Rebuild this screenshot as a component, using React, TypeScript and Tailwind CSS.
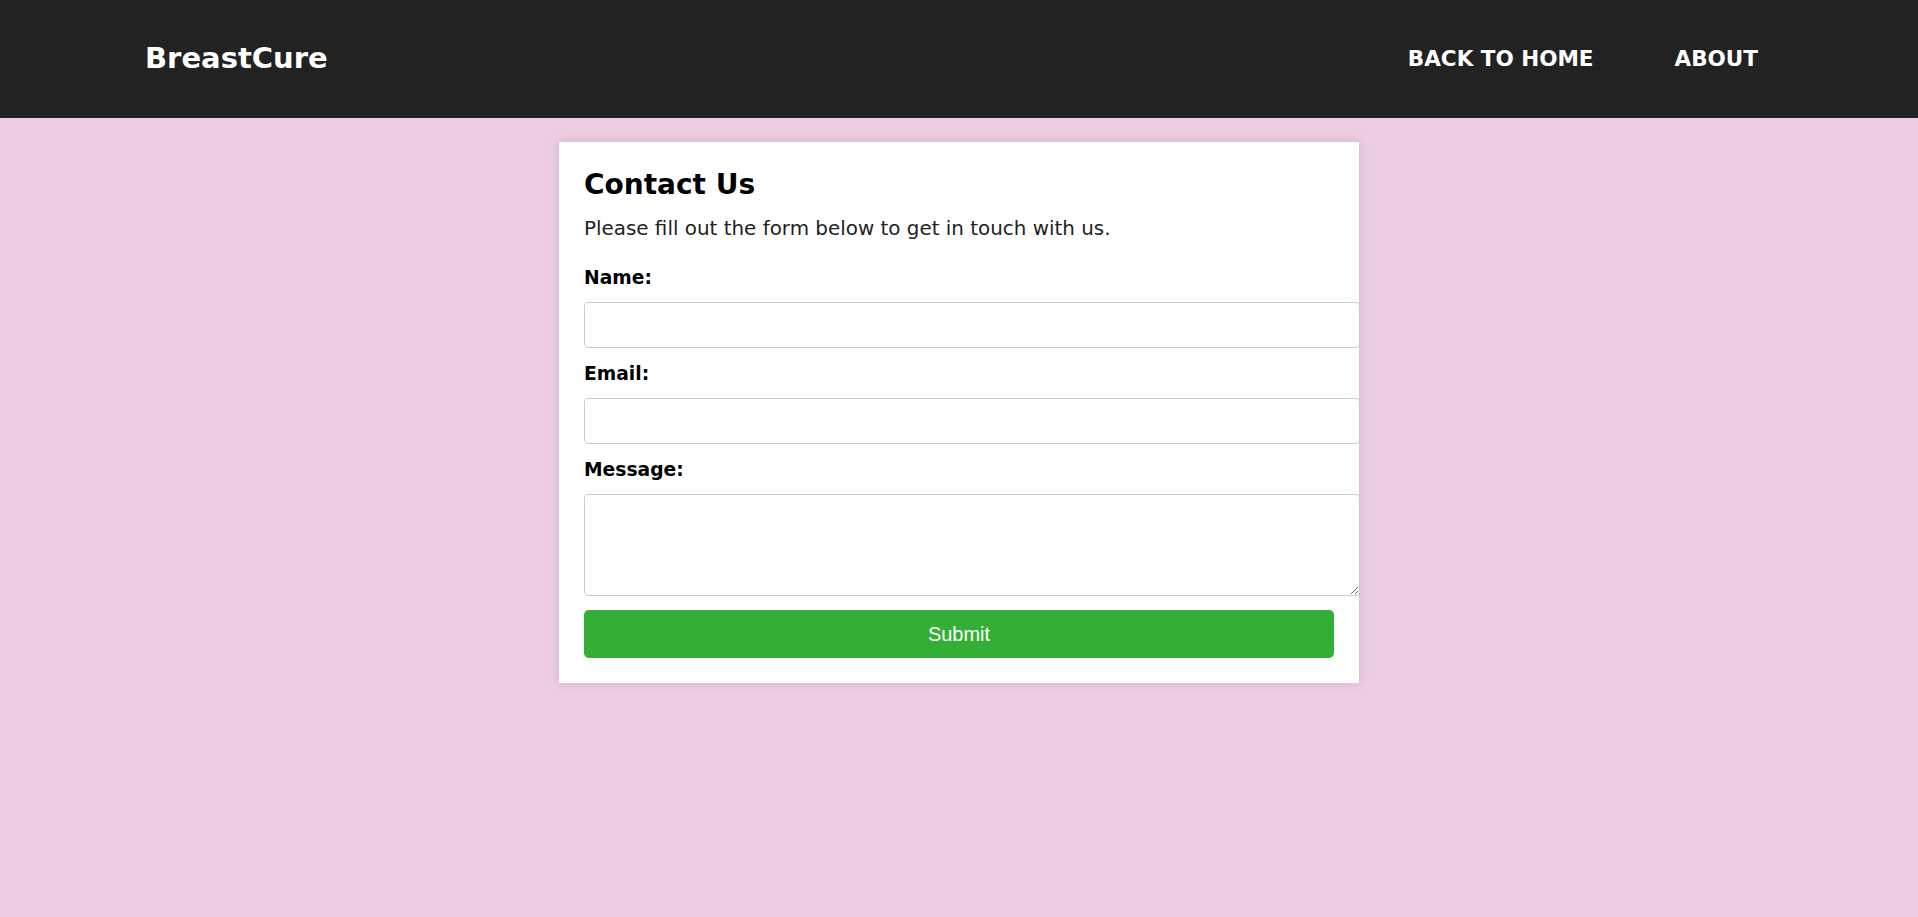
const labelCls = "block font-bold text-[18.7px] leading-[22px] text-black";
const fieldCls =
  "block w-[776px] rounded-[4px] border border-[#cccccc] bg-white px-3 outline-none";

export default function App() {
  return (
    <div className="min-h-[917px] bg-[#eccde4] font-['DejaVu_Sans',sans-serif]">
      <header className="flex h-[118px] items-center justify-between bg-[#222222] pl-[145px] pr-[160px] text-white">
        <div className="text-[29px] font-bold">BreastCure</div>
        <nav className="flex items-center gap-[81px] text-[21.5px] font-bold uppercase">
          <a href="#" className="text-white">Back to Home</a>
          <a href="#" className="text-white">About</a>
        </nav>
      </header>

      <main className="pt-[24px]">
        <div className="mx-auto w-[800px] bg-white p-[25px] shadow-[0_0_10px_rgba(0,0,0,0.12)]">
          <h2 className="text-[28px] font-bold leading-[36px] text-black">Contact Us</h2>
          <p className="mt-[14px] text-[19.9px] leading-[24px] text-[#222222]">
            Please fill out the form below to get in touch with us.
          </p>

          <form className="mt-[26px]" onSubmit={(e) => e.preventDefault()}>
            <div>
              <label htmlFor="name" className={labelCls}>Name:</label>
              <input id="name" type="text" className={`${fieldCls} mt-[13px] h-[46px]`} />
            </div>
            <div className="mt-[15px]">
              <label htmlFor="email" className={labelCls}>Email:</label>
              <input id="email" type="email" className={`${fieldCls} mt-[13px] h-[46px]`} />
            </div>
            <div className="mt-[15px]">
              <label htmlFor="message" className={labelCls}>Message:</label>
              <textarea id="message" className={`${fieldCls} mt-[13px] h-[102px] resize py-3`} />
            </div>
            <button
              type="submit"
              className="mt-[14px] block h-[48px] w-full rounded-[5px] bg-[#32af34] font-['Liberation_Sans',Arial,sans-serif] text-[20px] text-white"
            >
              Submit
            </button>
          </form>
        </div>
      </main>
    </div>
  );
}
